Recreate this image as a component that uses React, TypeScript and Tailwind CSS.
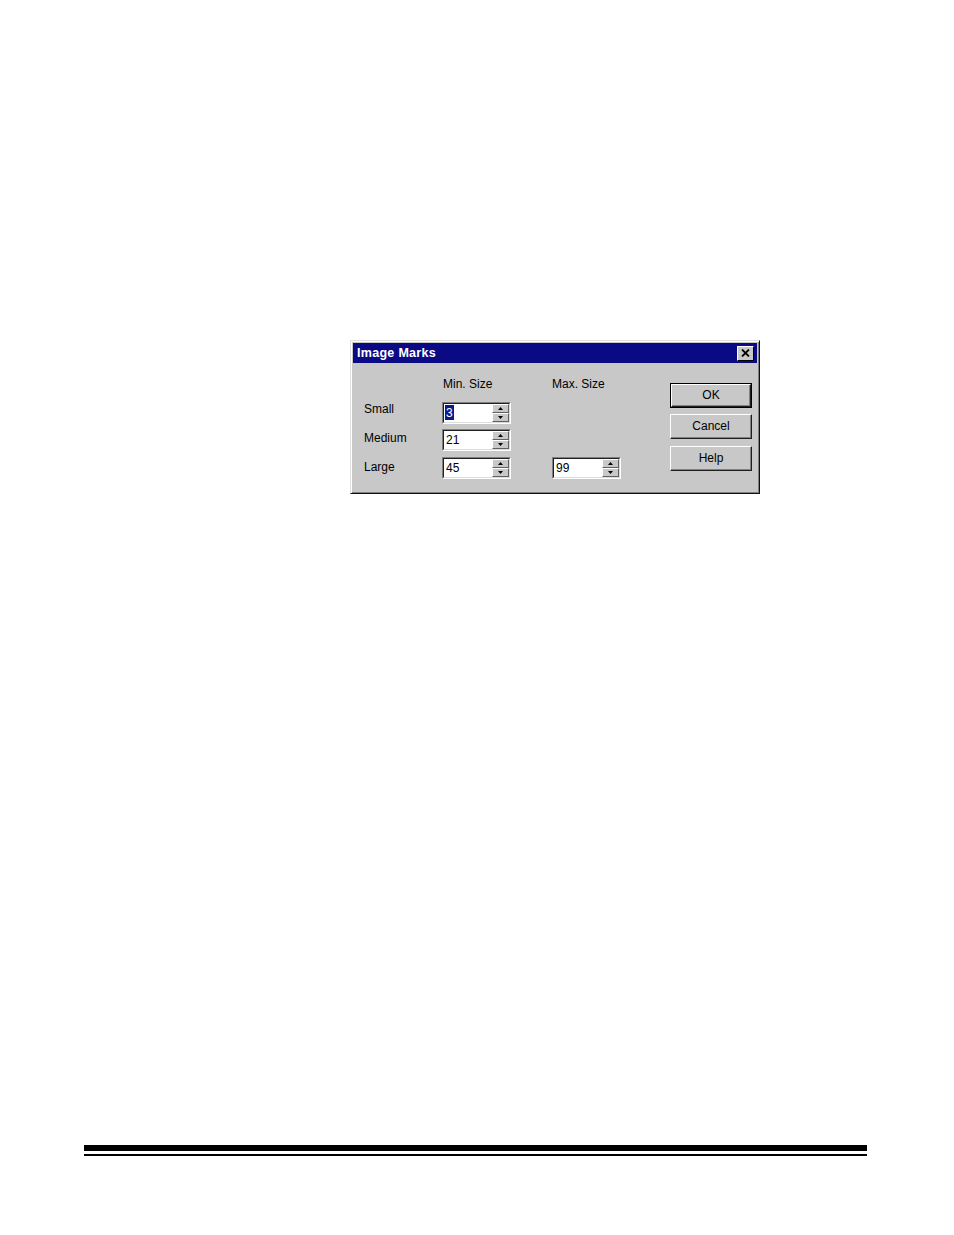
import React from 'react';

const font = { fontFamily: '"Liberation Sans", Arial, sans-serif' };

const SpinBox: React.FC<{ value: string; selected?: boolean }> = ({ value, selected }) => (
    <div className="w-[69px] h-[22px] flex border border-t-[#808080] border-l-[#808080] border-r-white border-b-white">
        <div className="flex-1 flex border border-t-[#202020] border-l-[#202020] border-r-[#dcdcdc] border-b-[#dcdcdc] bg-white">
            <div className="flex-1 flex items-center pl-[1px] pb-[1px] text-[12px] leading-none text-black">
                {selected ? (
                    <span className="bg-[#0a1a8c] text-white px-[1px] h-[15px] flex items-center">{value}</span>
                ) : (
                    <span className="pl-[1px]">{value}</span>
                )}
            </div>
            <div className="w-[17px] flex flex-col">
                <div className="h-1/2 bg-[#c8c8c8] border border-t-white border-l-white border-r-[#606060] border-b-[#606060] flex items-center justify-center">
                    <svg width="5" height="3" viewBox="0 0 5 3"><path d="M2.5 0L5 3H0z" fill="#000" /></svg>
                </div>
                <div className="h-1/2 bg-[#c8c8c8] border border-t-white border-l-white border-r-[#606060] border-b-[#606060] flex items-center justify-center">
                    <svg width="5" height="3" viewBox="0 0 5 3"><path d="M0 0H5L2.5 3z" fill="#000" /></svg>
                </div>
            </div>
        </div>
    </div>
);

const Button: React.FC<{ label: string; isDefault?: boolean }> = ({ label, isDefault }) => (
    <div className={`w-[82px] h-[25px] ${isDefault ? 'border border-black' : ''}`}>
        <div className="w-full h-full bg-[#c8c8c8] border border-t-white border-l-white border-r-[#202020] border-b-[#202020] shadow-[inset_-1px_-1px_#808080] flex items-center justify-center pb-[2px] text-[12px] text-black">
            {label}
        </div>
    </div>
);

const App: React.FC = () => {
    return (
        <div className="w-[954px] h-[1235px] bg-white flex flex-col" style={font}>
            <div className="pl-[350px] pt-[340px]">
                <div className="w-[410px] h-[154px] bg-[#c8c8c8] border border-t-[#e0e0e0] border-l-[#e0e0e0] border-r-[#101010] border-b-[#101010] shadow-[inset_1px_1px_white,inset_-1px_-1px_#808080] p-[2px] flex flex-col">
                    <div className="h-[20px] bg-[#0a0a84] flex items-center justify-between pl-[4px] pr-[3px]">
                        <span className="text-white font-bold text-[12.5px] tracking-[0.3px]">Image Marks</span>
                        <div className="w-[17px] h-[15px] bg-[#c8c8c8] border border-t-white border-l-white border-r-black border-b-black flex items-center justify-center">
                            <svg width="9" height="8" viewBox="0 0 9 8">
                                <path d="M1 0.5L8 7.5M8 0.5L1 7.5" stroke="#000" strokeWidth="1.8" />
                            </svg>
                        </div>
                    </div>
                    <div className="flex flex-1">
                        <div className="pl-[11px] pt-[14px] flex flex-col text-[12px] text-black">
                            <div className="h-[25px] flex">
                                <div className="w-[78px]" />
                                <div className="w-[110px] pl-[1px] leading-[14px]">Min. Size</div>
                                <div className="leading-[14px]">Max. Size</div>
                            </div>
                            <div className="h-[22px] flex items-center">
                                <div className="w-[78px] -mt-[8px]">Small</div>
                                <SpinBox value="3" selected />
                            </div>
                            <div className="h-[22px] mt-[5px] flex items-center">
                                <div className="w-[78px] -mt-[4px]">Medium</div>
                                <SpinBox value="21" />
                            </div>
                            <div className="h-[22px] mt-[6px] flex items-center">
                                <div className="w-[78px] -mt-[2px]">Large</div>
                                <SpinBox value="45" />
                                <div className="w-[41px]" />
                                <SpinBox value="99" />
                            </div>
                        </div>
                        <div className="ml-auto mr-[5px] pt-[20px] flex flex-col gap-[6px]">
                            <Button label="OK" isDefault />
                            <Button label="Cancel" />
                            <div className="mt-[1px]">
                                <Button label="Help" />
                            </div>
                        </div>
                    </div>
                </div>
            </div>
            <div className="mt-[651px] ml-[84px] w-[783px]">
                <div className="h-[6px] bg-black" />
                <div className="h-[2px] bg-black mt-[3px]" />
            </div>
        </div>
    );
};

export default App;
